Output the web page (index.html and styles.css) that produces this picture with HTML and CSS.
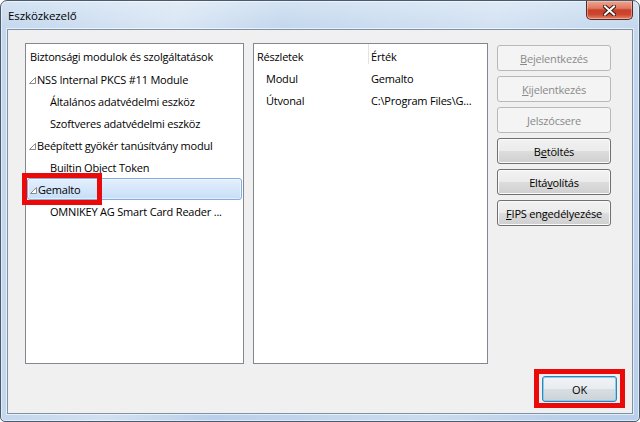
FILE: index.html
```html
<!DOCTYPE html>
<html lang="hu">
<head>
<meta charset="utf-8">
<title>Eszközkezelő</title>
<link rel="stylesheet" href="styles.css">
</head>
<body>
<div class="window">
  <div class="titlebar">
    <span class="title">Eszközkezelő</span>
    <div class="close" aria-label="Bezárás">
      <svg width="13" height="11" viewBox="0 0 13 11">
        <path d="M2 1.5 L11 9.5 M11 1.5 L2 9.5" stroke="#3b1a14" stroke-width="4" stroke-linecap="square" fill="none"/>
        <path d="M2 1.5 L11 9.5 M11 1.5 L2 9.5" stroke="#ffffff" stroke-width="2" stroke-linecap="square" fill="none"/>
      </svg>
    </div>
  </div>
  <div class="client">
    <div class="main">
      <div class="panel tree">
        <div class="tree-head">Biztonsági modulok és szolgáltatások</div>
        <div class="tree-row parent"><svg class="arrow" width="7" height="7" viewBox="0 0 7 7"><polygon points="6.5,0.5 6.5,6.5 0.5,6.5"/></svg><span>NSS Internal PKCS #11 Module</span></div>
        <div class="tree-row child"><span>Általános adatvédelmi eszköz</span></div>
        <div class="tree-row child"><span>Szoftveres adatvédelmi eszköz</span></div>
        <div class="tree-row parent"><svg class="arrow" width="7" height="7" viewBox="0 0 7 7"><polygon points="6.5,0.5 6.5,6.5 0.5,6.5"/></svg><span>Beépített gyökér tanúsítvány modul</span></div>
        <div class="tree-row child"><span>Builtin Object Token</span></div>
        <div class="tree-row parent selected"><svg class="arrow" width="7" height="7" viewBox="0 0 7 7"><polygon points="6.5,0.5 6.5,6.5 0.5,6.5"/></svg><span>Gemalto</span><i class="mark mark-gemalto"></i></div>
        <div class="tree-row child"><span>OMNIKEY AG Smart Card Reader ...</span></div>
      </div>
      <div class="panel details">
        <div class="list-head">
          <span class="c1">Részletek</span>
          <span class="c2">Érték</span>
        </div>
        <div class="list-row"><span class="c1">Modul</span><span class="c2">Gemalto</span></div>
        <div class="list-row"><span class="c1">Útvonal</span><span class="c2">C:\Program Files\G...</span></div>
      </div>
      <div class="buttons">
        <button class="btn" disabled><u>B</u>ejelentkezés</button>
        <button class="btn" disabled><u>K</u>ijelentkezés</button>
        <button class="btn" disabled><u>J</u>elszócsere</button>
        <button class="btn">B<u>e</u>töltés</button>
        <button class="btn">Eltá<u>v</u>olítás</button>
        <button class="btn"><u>F</u>IPS engedélyezése</button>
      </div>
    </div>
    <div class="footer">
      <button class="btn ok">OK<i class="mark mark-ok"></i></button>
    </div>
  </div>
</div>
</body>
</html>
```

FILE: styles.css
```css
html, body {
  margin: 0;
  padding: 0;
  background: #ffffff;
}

body {
  font-family: "Open Sans", "Noto Sans", sans-serif;
  font-size: 11px;
  letter-spacing: -0.2px;
  color: #000;
}

.window {
  width: 640px;
  height: 422px;
  box-sizing: border-box;
  border: 1px solid #4a5a6c;
  border-radius: 7px 7px 5px 5px;
  padding: 0 6px 7px 6px;
  display: flex;
  flex-direction: column;
  background:
    linear-gradient(100deg, rgba(255,255,255,0) 0%, rgba(255,255,255,0.35) 25%, rgba(255,255,255,0) 40%, rgba(255,255,255,0.25) 70%, rgba(255,255,255,0) 90%),
    linear-gradient(to bottom, #d4e3f3 0px, #c3d7ed 28px, #b9d0ea 100%);
  box-shadow: inset 0 0 0 1px rgba(255,255,255,0.55);
}

.titlebar {
  height: 28px;
  flex: none;
  display: flex;
  justify-content: space-between;
  align-items: flex-start;
}

.title {
  padding-left: 1px;
  line-height: 29px;
  font-size: 11.5px;
  letter-spacing: -0.1px;
  color: #000;
}

.close {
  width: 47px;
  height: 19px;
  box-sizing: border-box;
  border: 1px solid #5a2a20;
  border-top: none;
  border-radius: 0 0 5px 5px;
  background: linear-gradient(to bottom, #eca590 0%, #e07a60 40%, #c8402a 50%, #cc4630 75%, #e2866c 100%);
  box-shadow: inset 0 0 0 1px rgba(255,220,210,0.45);
  display: flex;
  align-items: center;
  justify-content: center;
}

.client {
  flex: 1;
  background: #f0f0f0;
  border: 1px solid #7f91a6;
  box-shadow: 0 0 0 1px rgba(255,255,255,0.6);
  display: flex;
  flex-direction: column;
}

.main {
  display: flex;
  gap: 9px;
  padding: 13px 0 0 17px;
  height: 321px;
}

.panel {
  background: #fff;
  border: 1px solid #828790;
  box-sizing: border-box;
  height: 321px;
}

.tree {
  width: 219px;
}

.details {
  width: 235px;
}

.tree-head {
  height: 24px;
  line-height: 25px;
  padding-left: 4px;
  white-space: nowrap;
}

.tree-row {
  position: relative;
  height: 22px;
  display: flex;
  align-items: center;
  white-space: nowrap;
  box-sizing: border-box;
}

.tree-row.parent {
  padding-left: 3px;
}

.tree-row.child {
  padding-left: 24px;
}

.arrow {
  width: 7px;
  flex: none;
  position: relative;
  top: 1px;
  margin-right: 1px;
}

.arrow polygon {
  fill: #ffffff;
  stroke: #8a8a8a;
  stroke-width: 1;
}

.tree-row.selected {
  margin: 0 1px;
  padding-left: 2px;
  border: 1px solid #84acdd;
  border-radius: 3px;
  background: linear-gradient(to bottom, #e4effc 0%, #d3e5fa 60%, #c7ddf7 100%);
  box-shadow: inset 0 0 0 1px rgba(255,255,255,0.5);
}

.mark {
  position: absolute;
  box-sizing: border-box;
  border: 5px solid #ea0a0a;
  pointer-events: none;
}

.mark-gemalto {
  left: -6px;
  top: -6px;
  width: 80px;
  height: 32px;
}

.list-head,
.list-row {
  display: grid;
  grid-template-columns: 114px 1fr;
  white-space: nowrap;
}

.list-head {
  height: 24px;
  line-height: 25px;
}

.list-head .c1 {
  padding-left: 3px;
}

.list-head .c2 {
  border-left: 1px solid #e3e3e3;
  padding-left: 2px;
  height: 20px;
}

.list-row {
  height: 22px;
  line-height: 22px;
}

.list-row .c1 {
  padding-left: 12px;
}

.list-row .c2 {
  padding-left: 3px;
  overflow: hidden;
}

.buttons {
  width: 114px;
  padding-top: 2px;
  display: flex;
  flex-direction: column;
  gap: 5px;
}

.btn {
  position: relative;
  height: 26px;
  box-sizing: border-box;
  border: 1px solid #707070;
  border-radius: 3px;
  background: linear-gradient(to bottom, #f2f2f2 0%, #ebebeb 50%, #dddddd 50%, #cfcfcf 100%);
  box-shadow: inset 0 0 0 1px #fbfbfb;
  font-family: "Open Sans", "Noto Sans", sans-serif;
  font-size: 11px;
  letter-spacing: -0.2px;
  color: #000;
  padding: 0;
  margin: 0;
}

.btn u {
  text-decoration: underline;
  text-underline-offset: 1px;
}

.btn:disabled {
  border-color: #b5b9bc;
  background: #f4f4f4;
  color: #8a8a8a;
  box-shadow: none;
}

.footer {
  display: flex;
  justify-content: flex-end;
  padding: 12px 15px 0 0;
}

.btn.ok {
  width: 75px;
  height: 26px;
  border-color: #3c7fb1;
  background: linear-gradient(to bottom, #f1f4f6 0%, #e8ecef 50%, #d8dfe4 50%, #cbd3d9 100%);
  box-shadow: inset 0 0 0 1px #7fd0f2;
}

.mark-ok {
  left: -9px;
  top: -8px;
  width: 91px;
  height: 39px;
}
```
